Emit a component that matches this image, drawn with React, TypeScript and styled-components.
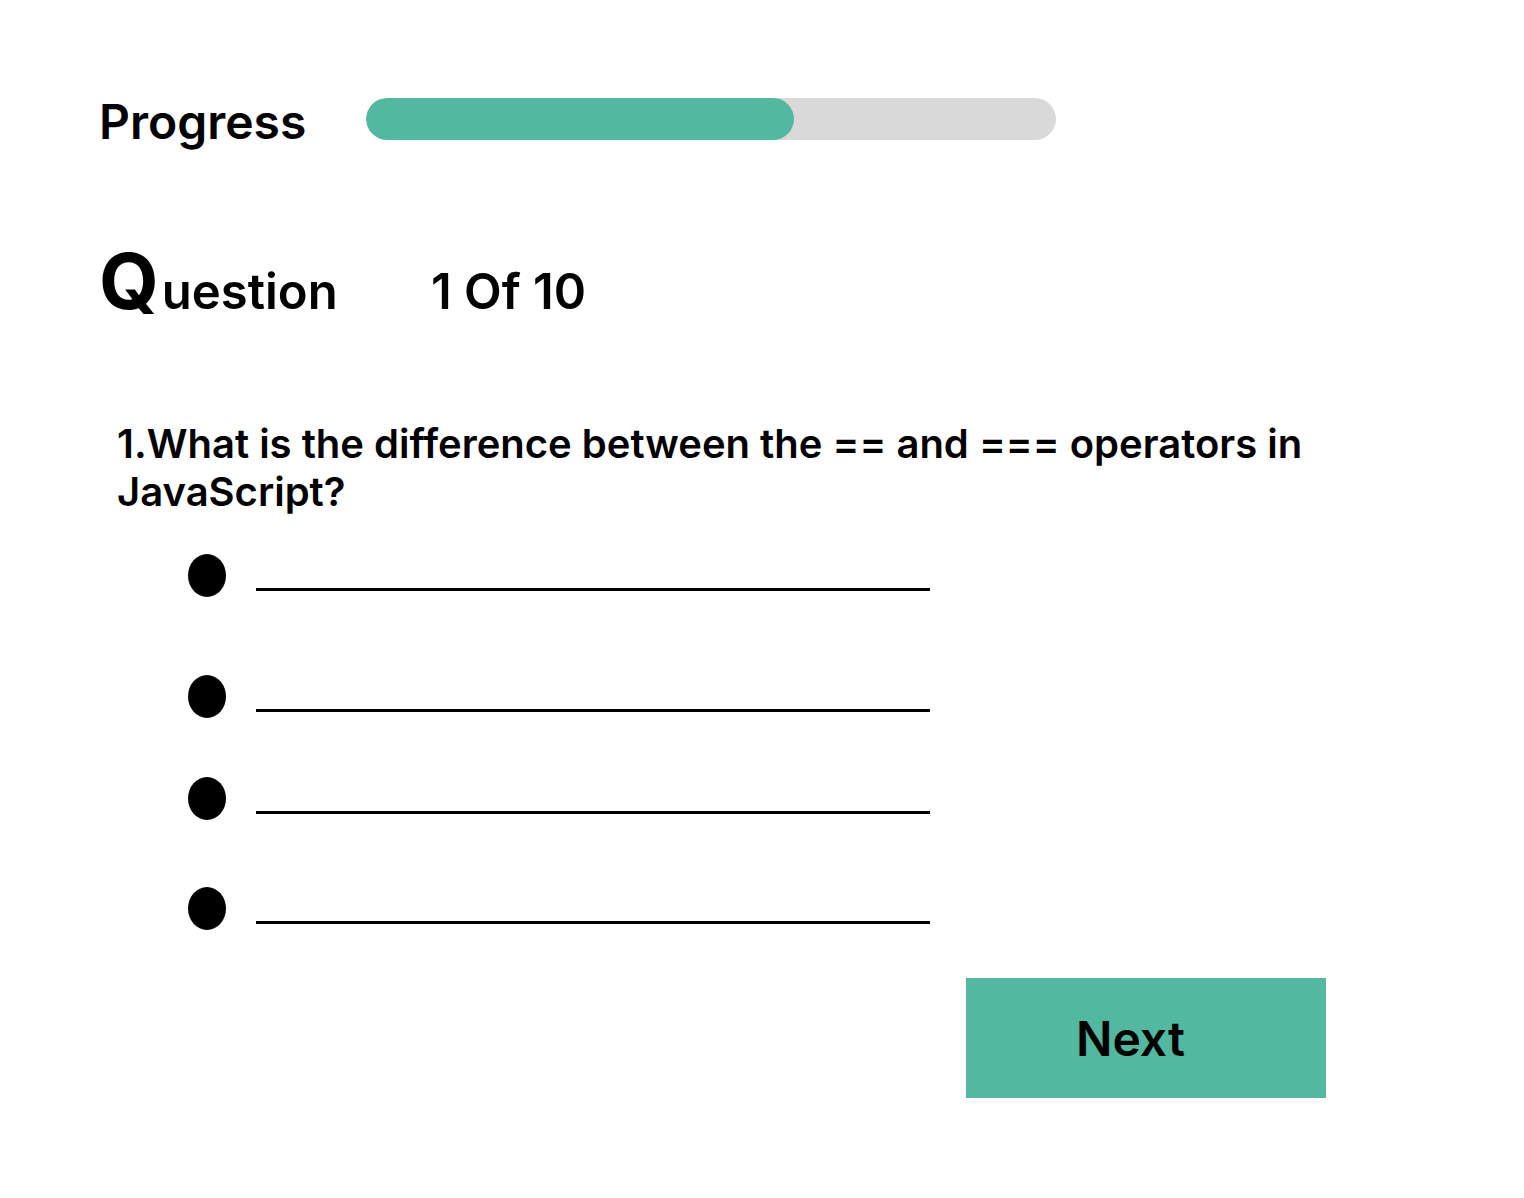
import React from "react";
import styled, { createGlobalStyle } from "styled-components";

const GlobalStyle = createGlobalStyle`
  body {
    margin: 0;
    background: #ffffff;
    font-family: Inter, "Noto Sans", sans-serif;
    color: #000000;
  }
`;

const Page = styled.div`
  display: flex;
  flex-direction: column;
  padding: 87px 0 0 99px;
  width: 1524px;
  height: 1198px;
  box-sizing: border-box;
`;

const ProgressRow = styled.div`
  display: flex;
  align-items: center;
  gap: 62px;
`;

const ProgressLabel = styled.div`
  font-size: 48px;
  font-weight: 600;
  line-height: 58px;
  padding-top: 6px;
  width: 205px;
`;

const Track = styled.div`
  width: 690px;
  height: 42px;
  border-radius: 21px;
  background: #d9d9d9;
  overflow: hidden;
`;

const Fill = styled.div`
  height: 100%;
  border-radius: 21px;
  background: #52b8a0;
`;

const QuestionHeader = styled.div`
  display: flex;
  align-items: baseline;
  margin-top: 83px;
`;

const QuestionTitle = styled.div`
  font-size: 49px;
  font-weight: 600;
  width: 332px;
`;

const BigQ = styled.span`
  font-size: 77px;
  font-weight: 700;
  margin-right: 3px;
`;

const Counter = styled.div`
  font-size: 49px;
  font-weight: 600;
`;

const QuestionText = styled.p`
  margin: 92px 0 0 18px;
  width: 1260px;
  font-size: 40px;
  font-weight: 600;
  line-height: 48px;
`;

const OptionList = styled.ul`
  list-style: none;
  margin: 38px 0 0 89px;
  padding: 0;
  display: flex;
  flex-direction: column;
`;

const Option = styled.li<{ $gap: number }>`
  display: flex;
  align-items: center;
  gap: 30px;
  margin-top: ${(p) => p.$gap}px;
  height: 43px;
`;

const Bullet = styled.span`
  width: 38px;
  height: 43px;
  border-radius: 50%;
  background: #000000;
  flex-shrink: 0;
`;

const AnswerLine = styled.span`
  width: 674px;
  height: 3px;
  background: #000000;
  margin-top: 28px;
`;

const Footer = styled.div`
  display: flex;
  margin: 48px 0 0 867px;
`;

const NextButton = styled.button`
  width: 360px;
  height: 120px;
  border: none;
  background: #52b8a0;
  color: #000000;
  font-family: Inter, "Noto Sans", sans-serif;
  font-size: 48px;
  font-weight: 600;
  text-align: left;
  padding: 0 0 0 110px;
  cursor: pointer;
`;

const gaps = [0, 78, 59, 67];

export default function App() {
  const progress = 428 / 690;
  return (
    <>
      <GlobalStyle />
      <Page>
        <ProgressRow>
          <ProgressLabel>Progress</ProgressLabel>
          <Track>
            <Fill style={{ width: `${progress * 100}%` }} />
          </Track>
        </ProgressRow>
        <QuestionHeader>
          <QuestionTitle>
            <BigQ>Q</BigQ>uestion
          </QuestionTitle>
          <Counter>1 Of 10</Counter>
        </QuestionHeader>
        <QuestionText>
          1.What is the difference between the == and === operators in
          JavaScript?
        </QuestionText>
        <OptionList>
          {gaps.map((g, i) => (
            <Option key={i} $gap={g}>
              <Bullet />
              <AnswerLine />
            </Option>
          ))}
        </OptionList>
        <Footer>
          <NextButton>Next</NextButton>
        </Footer>
      </Page>
    </>
  );
}
